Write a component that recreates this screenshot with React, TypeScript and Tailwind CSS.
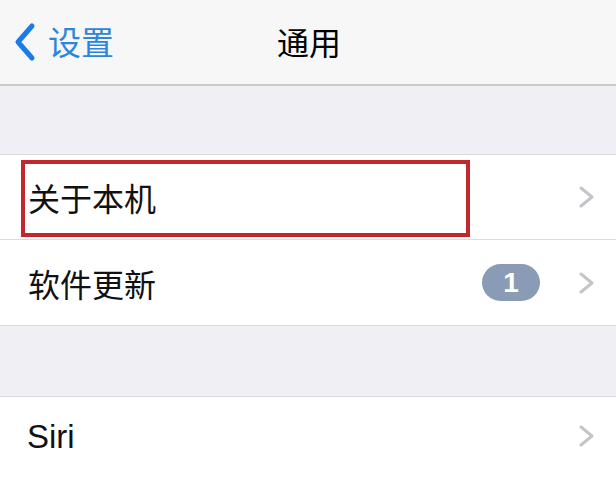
import React from "react";

const font = { fontFamily: '"Noto Sans CJK SC", "Liberation Sans", sans-serif' };

function Chevron() {
  return (
    <svg width="17" height="22" viewBox="0 0 17 22" className="shrink-0">
      <path d="M3 2 L14 11 L3 20" fill="none" stroke="#c4c4c9" strokeWidth="3" strokeLinecap="round" strokeLinejoin="round" />
    </svg>
  );
}

export default function App() {
  return (
    <div className="w-[616px] h-[477px] overflow-hidden bg-[#efeff4] flex flex-col" style={font}>
      {/* Nav bar */}
      <div className="h-[86px] shrink-0 bg-[#f7f7f7] border-b-2 border-[#c9c9cc] relative flex items-center justify-center">
        <div className="absolute left-[13px] top-0 h-full flex items-center gap-[11px]">
          <svg width="24" height="40" viewBox="0 0 24 40">
            <path d="M19 4 L5 20 L19 36" fill="none" stroke="#1a7ce6" strokeWidth="5" strokeLinecap="round" strokeLinejoin="round" />
          </svg>
          <span className="text-[33px] leading-none text-[#2d86dc] pb-[2px]">设置</span>
        </div>
        <span className="text-[32px] leading-none text-black pb-[2px] pl-[2px]">通用</span>
      </div>

      {/* gray gap */}
      <div className="h-[69px] shrink-0 bg-[#efeff4] border-b border-[#d9d9dd]" />

      {/* rows */}
      <div className="bg-white shrink-0 flex flex-col">
        <div className="h-[85px] relative flex items-center pl-[28px] pr-[21px] border-b border-[#dcdce0]">
          <span className="text-[32px] leading-none text-[#111]">关于本机</span>
          <div className="flex-1" />
          <Chevron />
          <div className="absolute left-[21px] top-[5px] w-[449px] h-[77px] border-4 border-[#c1272d]" />
        </div>
        <div className="h-[86px] flex items-center pl-[28px] pr-[21px] border-b border-[#d9d9dd]">
          <span className="text-[32px] leading-none text-[#111]">软件更新</span>
          <div className="flex-1" />
          <div className="w-[58px] h-[37px] rounded-full bg-[#8a9bb6] flex items-center justify-center mr-[38px]">
            <span className="text-white text-[28px] font-bold leading-none" style={{ fontFamily: '"Liberation Sans", sans-serif' }}>1</span>
          </div>
          <Chevron />
        </div>
      </div>

      {/* gray gap */}
      <div className="h-[71px] shrink-0 bg-[#efeff4] border-b border-[#d9d9dd]" />

      <div className="bg-white flex-1 flex items-center pl-[27px] pr-[21px] pb-[2px]">
        <span className="text-[33px] leading-none text-[#111]" style={{ fontFamily: '"Liberation Sans", sans-serif' }}>Siri</span>
        <div className="flex-1" />
        <Chevron />
      </div>
    </div>
  );
}
